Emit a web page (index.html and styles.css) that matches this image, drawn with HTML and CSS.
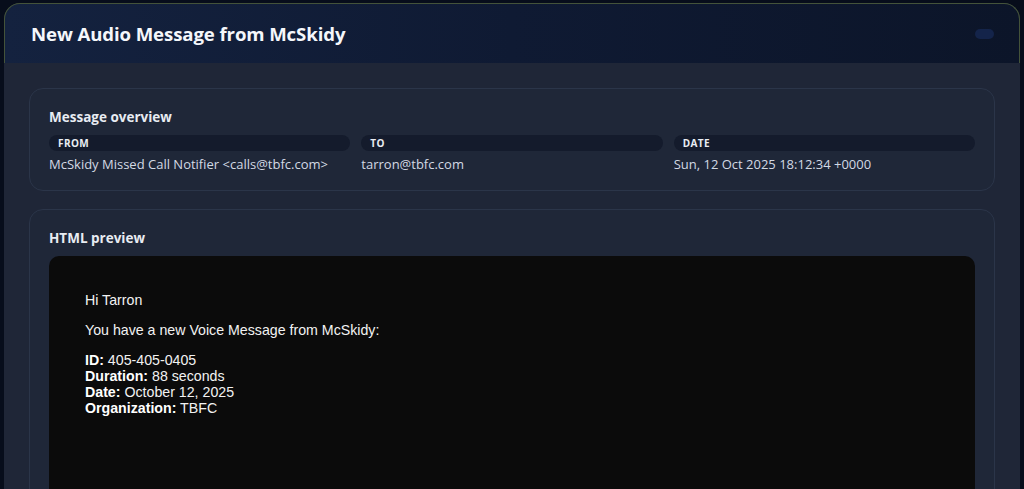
FILE: index.html
```html
<!DOCTYPE html>
<html lang="en">
<head>
<meta charset="utf-8">
<title>New Audio Message from McSkidy</title>
<link rel="stylesheet" href="styles.css">
</head>
<body>
<div class="panel">
  <header class="panel-header">
    <h1 class="panel-title">New Audio Message from McSkidy</h1>
    <span class="header-pill"></span>
  </header>
  <main class="panel-body">
    <section class="card">
      <h2 class="card-title">Message overview</h2>
      <div class="meta-grid">
        <div class="meta-item">
          <div class="meta-label">FROM</div>
          <div class="meta-value">McSkidy Missed Call Notifier &lt;calls@tbfc.com&gt;</div>
        </div>
        <div class="meta-item">
          <div class="meta-label">TO</div>
          <div class="meta-value">tarron@tbfc.com</div>
        </div>
        <div class="meta-item">
          <div class="meta-label">DATE</div>
          <div class="meta-value">Sun, 12 Oct 2025 18:12:34 +0000</div>
        </div>
      </div>
    </section>
    <section class="card">
      <h2 class="card-title">HTML preview</h2>
      <div class="preview">
        <p>Hi Tarron</p>
        <p>You have a new Voice Message from McSkidy:</p>
        <p><b>ID:</b> 405-405-0405<br>
        <b>Duration:</b> 88 seconds<br>
        <b>Date:</b> October 12, 2025<br>
        <b>Organization:</b> TBFC</p>
      </div>
    </section>
  </main>
</div>
</body>
</html>
```
FILE: styles.css
```css
* { box-sizing: border-box; }
html, body { height: 100%; }
body {
  margin: 0;
  padding: 3px 4px 0 4px;
  background: #070d1b;
  font-family: "Open Sans", "Noto Sans", sans-serif;
  color: #e6ebf2;
  overflow: hidden;
}
.panel {
  min-height: 100%;
  background: #1f2637;
  border-radius: 16px 16px 0 0;
}
.panel-header {
  height: 60px;
  display: flex;
  align-items: center;
  justify-content: space-between;
  padding: 0 25px 0 26px;
  background: linear-gradient(90deg, #14223f 0%, #0f1a33 50%, #0c1529 100%);
  border: 1px solid #44533a;
  border-bottom: none;
  border-radius: 16px 16px 0 0;
}
.panel-title {
  margin: 0;
  font-size: 18.6px;
  font-weight: 700;
  color: #f5f7fb;
  letter-spacing: -0.1px;
}
.header-pill {
  width: 19px;
  height: 10px;
  border-radius: 5px;
  background: #14244a;
}
.panel-body {
  padding: 25px 25px 0 25px;
  display: flex;
  flex-direction: column;
  gap: 18px;
}
.card {
  border: 1px solid #2b3549;
  border-radius: 14px;
  background: #1f2738;
  padding: 19px 19px 17px 19px;
}
.card-title {
  margin: 0 0 8px 0;
  font-size: 13.5px;
  font-weight: 700;
  color: #e8ecf2;
  line-height: 19px;
}
.meta-grid {
  display: grid;
  grid-template-columns: 1fr 1fr 1fr;
  gap: 11px;
}
.meta-label {
  height: 16px;
  line-height: 16px;
  border-radius: 8px;
  background: #141b2c;
  padding: 0 9px;
  font-size: 10px;
  font-weight: 700;
  letter-spacing: 0.4px;
  color: #e9edf3;
}
.meta-value {
  margin-top: 4px;
  font-size: 13px;
  line-height: 18px;
  color: #d3d9e4;
  white-space: nowrap;
}
.preview {
  background: #0b0b0b;
  border-radius: 10px 10px 0 0;
  min-height: 260px;
  padding: 22px 36px 40px 36px;
  font-family: "Liberation Sans", Arial, sans-serif;
  font-size: 14.2px;
  line-height: 16px;
  color: #f2f2f2;
}
.preview p { margin: 14px 0; }
.preview b { color: #ffffff; }
```
